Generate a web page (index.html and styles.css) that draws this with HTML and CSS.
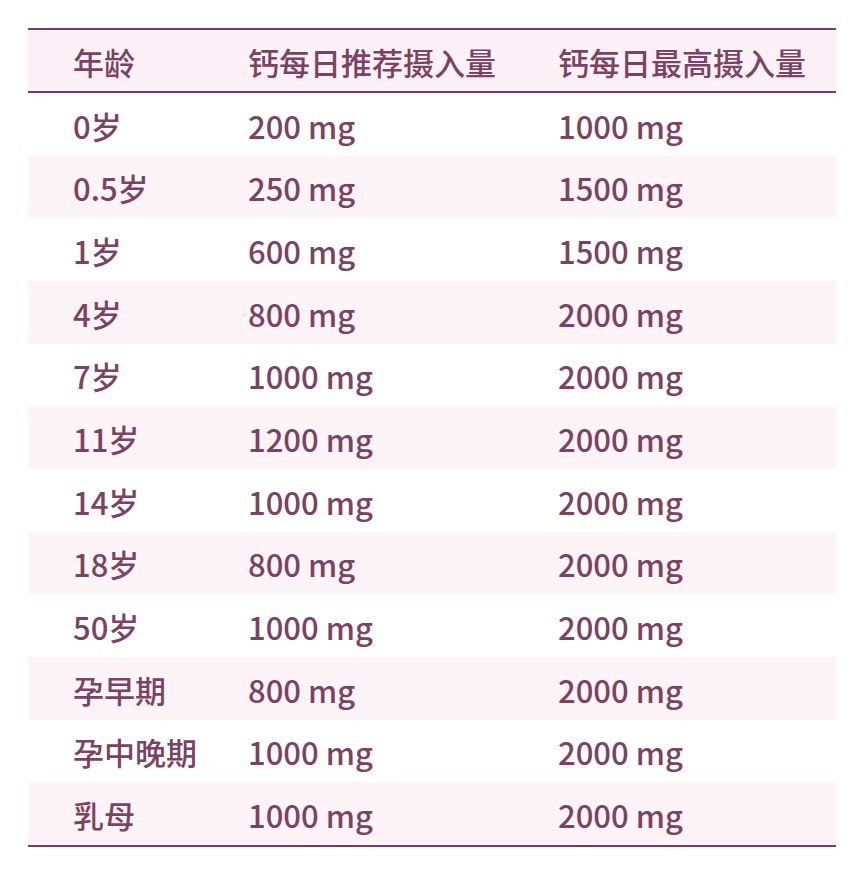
FILE: index.html
```html
<!DOCTYPE html>
<html lang="zh-CN">
<head>
<meta charset="utf-8">
<title>钙每日摄入量</title>
<link rel="stylesheet" href="styles.css">
</head>
<body>
<div class="table">
  <div class="row head"><div>年龄</div><div>钙每日推荐摄入量</div><div>钙每日最高摄入量</div></div>
  <div class="row"><div>0岁</div><div>200 mg</div><div>1000 mg</div></div>
  <div class="row alt"><div>0.5岁</div><div>250 mg</div><div>1500 mg</div></div>
  <div class="row"><div>1岁</div><div>600 mg</div><div>1500 mg</div></div>
  <div class="row alt"><div>4岁</div><div>800 mg</div><div>2000 mg</div></div>
  <div class="row"><div>7岁</div><div>1000 mg</div><div>2000 mg</div></div>
  <div class="row alt"><div>11岁</div><div>1200 mg</div><div>2000 mg</div></div>
  <div class="row"><div>14岁</div><div>1000 mg</div><div>2000 mg</div></div>
  <div class="row alt"><div>18岁</div><div>800 mg</div><div>2000 mg</div></div>
  <div class="row"><div>50岁</div><div>1000 mg</div><div>2000 mg</div></div>
  <div class="row alt"><div>孕早期</div><div>800 mg</div><div>2000 mg</div></div>
  <div class="row"><div>孕中晚期</div><div>1000 mg</div><div>2000 mg</div></div>
  <div class="row alt"><div>乳母</div><div>1000 mg</div><div>2000 mg</div></div>
</div>
</body>
</html>
```

FILE: styles.css
```css
html, body {
  margin: 0;
  padding: 0;
  background: #ffffff;
}
body {
  font-family: "Noto Sans CJK SC", "Noto Sans", sans-serif;
  font-weight: 500;
  color: #7a4363;
  font-size: 31px;
}
.table {
  margin: 28px 0 0 28px;
  width: 808px;
  border-top: 2px solid #733d5d;
  border-bottom: 2px solid #733d5d;
}
.row {
  display: grid;
  grid-template-columns: 175px 310px 1fr;
  align-items: center;
  padding-left: 45px;
  height: 62.67px;
  line-height: 1;
}
.row > div {
  padding-top: 2px;
}
.head {
  height: 61px;
  background: #fdf1f7;
  border-bottom: 2px solid #733d5d;
}
.alt {
  background: #fdf4f8;
}
```
